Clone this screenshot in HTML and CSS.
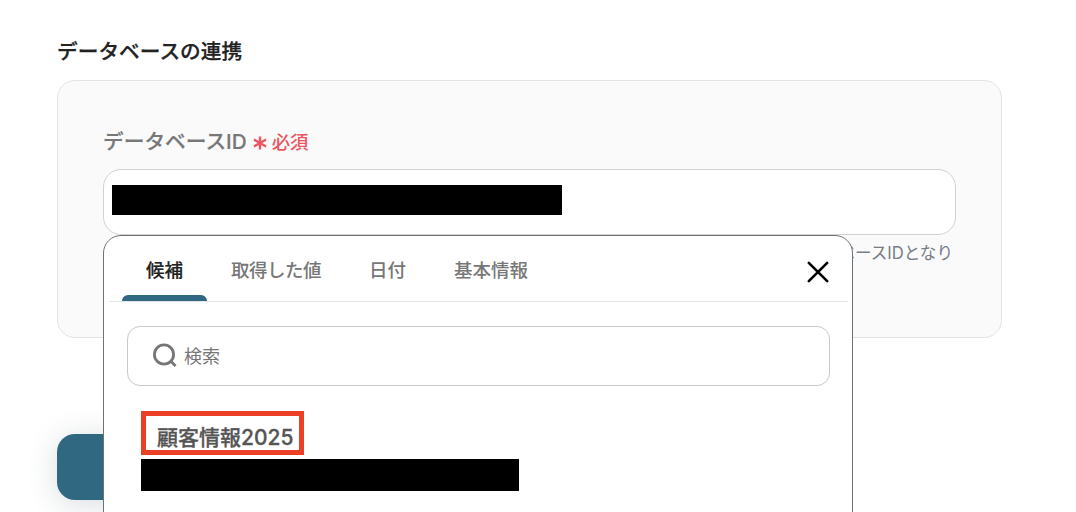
FILE: index.html
```
<!DOCTYPE html>
<html lang="ja">
<head>
    <meta charset="UTF-8">
    <meta name="viewport" content="width=device-width, initial-scale=1.0">
    <title>データベースの連携</title>
    <link rel="stylesheet" href="styles.css">
</head>
<body>
    <main class="page">
        <h2 class="section-title">データベースの連携</h2>

        <section class="card">
            <div class="field-label">
                <span class="label-text">データベースID</span>
                <svg class="required-mark" viewBox="0 0 14 14" aria-hidden="true">
                    <path d="M7 0.4v13.2M0.9 3.5l12.2 7M13.1 3.5L0.9 10.5"/>
                </svg>
                <span class="required-text">必須</span>
            </div>

            <div class="field">
                <div class="input-box">
                    <span class="masked masked-input"></span>
                </div>

                <!-- Candidate picker -->
                <div class="popup">
                    <div class="tab-bar">
                        <div class="tab active">候補</div>
                        <div class="tab tab-values">取得した値</div>
                        <div class="tab">日付</div>
                        <div class="tab">基本情報</div>
                        <button class="close-button" type="button" aria-label="閉じる">
                            <svg viewBox="0 0 24 24" width="24" height="24">
                                <path d="M2.8 2.8l18.4 18.4M21.2 2.8l-18.4 18.4"/>
                            </svg>
                        </button>
                    </div>

                    <div class="search-box">
                        <svg class="search-icon" viewBox="0 0 26 26" width="26" height="26">
                            <circle cx="12" cy="11.5" r="9.6"/>
                            <path d="M18.8 18.3l4.8 4.8"/>
                        </svg>
                        <span class="search-text">検索</span>
                    </div>

                    <div class="candidate">
                        <div class="candidate-name">顧客情報2025</div>
                        <span class="masked masked-candidate"></span>
                    </div>
                </div>
            </div>

            <p class="help-text">ベースIDとなり</p>
        </section>

        <button class="submit-button" type="button" aria-label="保存"></button>
    </main>
</body>
</html>
```
FILE: styles.css
```
* {
    margin: 0;
    padding: 0;
    box-sizing: border-box;
}

body {
    font-family: Inter, 'Noto Sans CJK JP', sans-serif;
    background: #fff;
    height: 512px;
    overflow: hidden;
}

.page {
    width: 1002px;
    padding: 36px 0 0 57px;
}

.section-title {
    height: 44px;
    line-height: 32px;
    font-size: 20.7px;
    font-weight: 500;
    color: #222;
    -webkit-text-stroke: 0.25px #222;
}

.card {
    height: 258px;
    padding: 42px 45px 0;
    background: #fafafa;
    border: 1px solid #e2e3e5;
    border-radius: 18px;
}

.field-label {
    display: flex;
    align-items: center;
    height: 34px;
    margin-bottom: 12px;
    white-space: nowrap;
}

.label-text {
    font-size: 20.7px;
    font-weight: 500;
    color: #777;
    -webkit-text-stroke: 0.2px #777;
}

.required-mark {
    width: 14px;
    height: 14px;
    margin: 5px 5px 0 6px;
    fill: none;
    stroke: #ed5660;
    stroke-width: 2.4;
}

.required-text {
    margin-top: 2px;
    font-size: 18.4px;
    font-weight: 500;
    color: #ed5660;
}

.field {
    position: relative;
}

.input-box {
    display: flex;
    height: 66px;
    padding: 15px 8px;
    background: #fff;
    border: 1px solid #d0d1d5;
    border-radius: 18px;
}

.masked {
    display: block;
    background: #000;
}

.masked-input {
    width: 450px;
    height: 30px;
}

.help-text {
    height: 36px;
    padding-right: 3px;
    line-height: 36px;
    font-size: 16.6px;
    text-align: right;
    color: #777d86;
}

.popup {
    position: absolute;
    top: 66px;
    left: 0;
    z-index: 1;
    width: 750px;
    height: 300px;
    padding: 0 4px 0 5px;
    background: #fff;
    border: 1px solid #6f7275;
    border-radius: 18px;
}

.tab-bar {
    display: flex;
    height: 66px;
    padding-left: 13px;
    border-bottom: 1px solid #e5e5e5;
}

.tab {
    padding: 0 24px;
    line-height: 68px;
    font-size: 18.5px;
    font-weight: 500;
    color: #777;
    white-space: nowrap;
}

.tab-values {
    letter-spacing: -0.5px;
}

.tab.active {
    display: flex;
    flex-direction: column;
    color: #222;
    -webkit-text-stroke: 0.2px #222;
}

.tab.active::after {
    content: '';
    flex: none;
    height: 6px;
    margin: -9px -24px 0;
    background: #306882;
    border-radius: 6px 6px 0 0;
}

.close-button {
    display: flex;
    margin: 24px 18px 0 auto;
    height: 24px;
    background: none;
    border: none;
}

.close-button path {
    fill: none;
    stroke: #000;
    stroke-width: 2.6;
    stroke-linecap: round;
}

.search-box {
    display: flex;
    align-items: center;
    height: 60px;
    margin: 24px 18px 0;
    padding-left: 24px;
    border: 1px solid #c9c9c9;
    border-radius: 13px;
}

.search-icon {
    fill: none;
    stroke: #777;
    stroke-width: 2.8;
}

.search-text {
    margin: -2px 0 0 6px;
    font-size: 18px;
    color: #777;
}

.candidate {
    margin: 25px 0 0 32px;
}

.candidate-name {
    width: 163px;
    height: 44px;
    padding-left: 11px;
    line-height: 43px;
    font-size: 21px;
    font-weight: 500;
    color: #555;
    border: 5px solid #ec4026;
    white-space: nowrap;
    -webkit-text-stroke: 0.3px #555;
}

.masked-candidate {
    width: 378px;
    height: 32px;
    margin-top: 4px;
}

.submit-button {
    display: block;
    width: 240px;
    height: 66px;
    margin-top: 96px;
    background: #306882;
    border: none;
    border-radius: 18px;
    box-shadow: 0 4px 30px rgba(40, 60, 70, 0.18);
}
```
